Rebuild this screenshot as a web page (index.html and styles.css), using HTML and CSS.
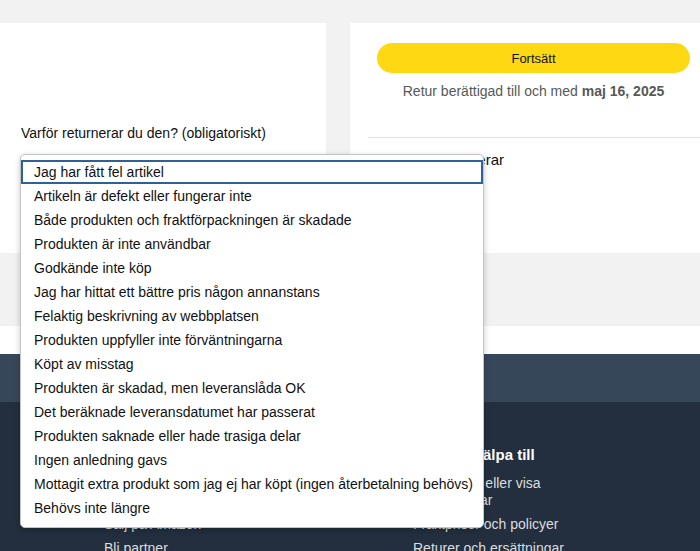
FILE: index.html
```html
<!DOCTYPE html>
<html lang="sv">
<head>
<meta charset="utf-8">
<title>Returnera artikel</title>
<link rel="stylesheet" href="styles.css">
</head>
<body>
<div class="page">
  <div class="cards">
    <section class="card card-left">
      <p class="label">Varför returnerar du den? (obligatoriskt)</p>
      <div class="select-wrap">
        <div class="select"></div>
        <ul class="popup">
          <li class="opt active">Jag har fått fel artikel</li>
          <li class="opt">Artikeln är defekt eller fungerar inte</li>
          <li class="opt">Både produkten och fraktförpackningen är skadade</li>
          <li class="opt">Produkten är inte användbar</li>
          <li class="opt">Godkände inte köp</li>
          <li class="opt">Jag har hittat ett bättre pris någon annanstans</li>
          <li class="opt">Felaktig beskrivning av webbplatsen</li>
          <li class="opt">Produkten uppfyller inte förväntningarna</li>
          <li class="opt">Köpt av misstag</li>
          <li class="opt">Produkten är skadad, men leveranslåda OK</li>
          <li class="opt">Det beräknade leveransdatumet har passerat</li>
          <li class="opt">Produkten saknade eller hade trasiga delar</li>
          <li class="opt">Ingen anledning gavs</li>
          <li class="opt">Mottagit extra produkt som jag ej har köpt (ingen återbetalning behövs)</li>
          <li class="opt">Behövs inte längre</li>
        </ul>
      </div>
    </section>
    <section class="card card-right">
      <div class="action">
        <button class="btn-primary" type="button">Fortsätt</button>
        <p class="eligible">Retur berättigad till och med <b>maj 16, 2025</b></p>
      </div>
      <hr class="divider">
      <h2 class="sub">Hur du returnerar</h2>
    </section>
  </div>
  <div class="band"></div>
  <div class="strip"></div>
  <footer class="footer">
    <div class="backtop"></div>
    <div class="foot-main">
      <div class="col">
        <h3 class="col-title">Tjäna pengar med oss</h3>
        <ul class="links">
          <li>Sälj produkter på Amazon Business</li>
          <li>Sälj på Amazon</li>
          <li>Bli partner</li>
        </ul>
      </div>
      <div class="col">
        <h3 class="col-title">Låt oss hjälpa till</h3>
        <ul class="links">
          <li>Spåra frakt eller visa beställningar</li>
          <li>Fraktpriser och policyer</li>
          <li>Returer och ersättningar</li>
        </ul>
      </div>
    </div>
  </footer>
</div>
</body>
</html>
```

FILE: styles.css
```css
* { box-sizing: border-box; }
html, body {
  margin: 0;
  padding: 0;
}
body {
  background: #f2f2f2;
  font-family: "Liberation Sans", Arial, sans-serif;
  color: #0f1111;
  font-size: 14px;
  overflow: hidden;
}
.page {
  padding-top: 23px;
}
.cards {
  display: flex;
  gap: 24px;
  height: 230px;
}
.card {
  background: #fff;
  height: 100%;
}
.card-left {
  width: 326px;
  flex: none;
  padding: 100px 0 0 21px;
}
.label {
  margin: 0;
  line-height: 20px;
  font-size: 14px;
  white-space: nowrap;
}
.select-wrap {
  position: relative;
  margin-top: 11px;
}
.select {
  height: 30px;
  width: 280px;
  border: 1px solid #d5d9d9;
  border-radius: 8px;
  background: #f0f2f2;
}
.popup {
  position: absolute;
  top: 0;
  left: -1px;
  width: 464px;
  height: 374px;
  margin: 0;
  padding: 5px 0 7px;
  list-style: none;
  background: #fff;
  border: 1px solid #c4c4c4;
  border-radius: 5px;
  box-shadow: 0 2px 6px rgba(0, 0, 0, 0.22);
  z-index: 5;
}
.opt {
  height: 24px;
  line-height: 24px;
  padding-left: 13px;
  white-space: nowrap;
  color: #111;
}
.opt.active {
  outline: 2px solid #2f6096;
  outline-offset: -2px;
}
.card-right {
  flex: 1;
  padding: 20px 0 0 18px;
}
.action {
  margin: 0 10px 0 9px;
  text-align: center;
}
.btn-primary {
  display: block;
  width: 100%;
  height: 30px;
  border: 0;
  border-radius: 15px;
  background: #ffd814;
  color: #0f1111;
  font-family: inherit;
  font-size: 13px;
  padding: 0;
}
.eligible {
  margin: 8px 0 0;
  line-height: 20px;
  color: #565959;
  font-size: 14px;
}
.eligible b {
  font-weight: 700;
}
.divider {
  margin: 36px 0 0;
  border: 0;
  border-top: 1px solid #e3e3e3;
}
.sub {
  margin: 12px 0 0;
  padding-left: 21px;
  font-size: 15px;
  font-weight: 400;
  line-height: 20px;
}
.band {
  height: 73px;
}
.strip {
  height: 28px;
  background: #fff;
}
.footer {
  background: #232f3e;
  color: #ddd;
}
.backtop {
  height: 48px;
  background: #37475a;
}
.foot-main {
  display: flex;
  padding: 43px 0 0 104px;
  height: 149px;
}
.col {
  width: 309px;
  flex: none;
}
.col-title {
  margin: 0;
  color: #fff;
  font-size: 15px;
  font-weight: 700;
  line-height: 20px;
  white-space: nowrap;
}
.links {
  list-style: none;
  margin: 10px 0 0;
  padding: 0;
  width: 155px;
}
.links li {
  line-height: 17px;
  margin-bottom: 7px;
  font-size: 14px;
  color: #ddd;
}
```
